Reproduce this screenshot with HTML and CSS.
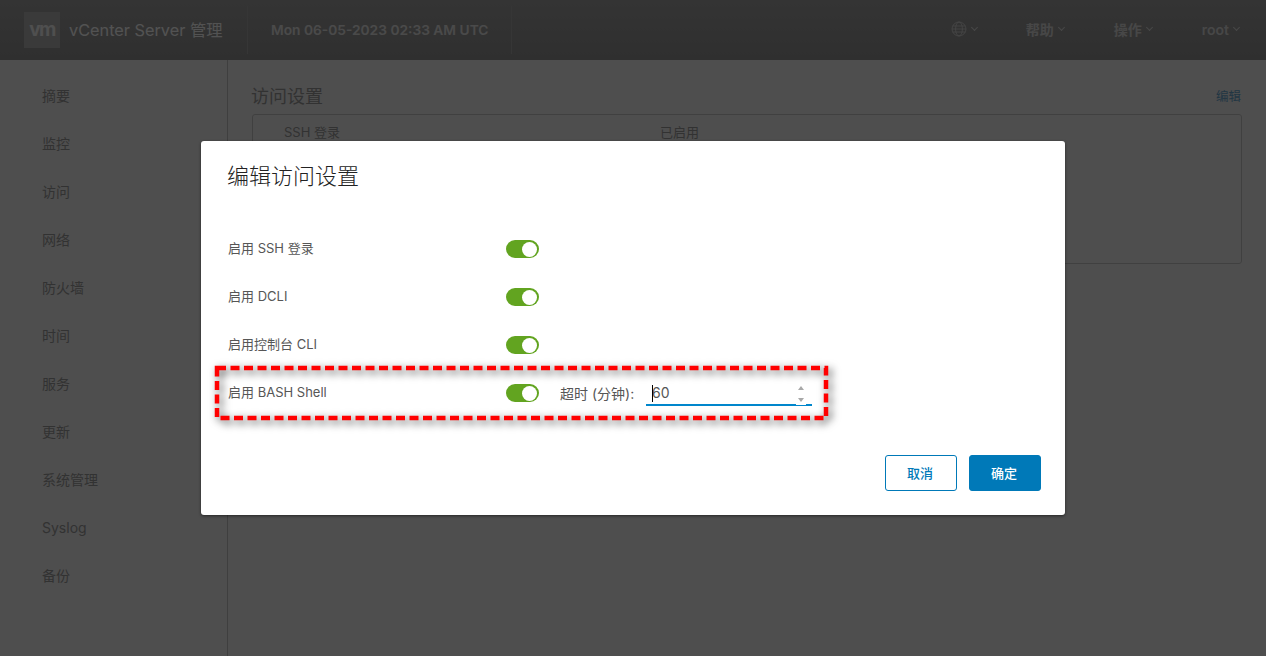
FILE: index.html
```html
<!DOCTYPE html>
<html lang="zh-CN">
<head>
    <meta charset="UTF-8">
    <title>vCenter Server 管理</title>
    <link rel="stylesheet" href="styles.css">
</head>
<body>
    <header class="top-bar">
        <div class="brand">
            <span class="logo">vm</span>
            <span class="brand-name">vCenter Server 管理</span>
        </div>
        <div class="clock">Mon 06-05-2023 02:33 AM UTC</div>
        <nav class="top-menu">
            <span class="top-item globe-item">
                <svg class="globe" width="16" height="16" viewBox="0 0 16 16" fill="none" stroke="currentColor" stroke-width="0.8">
                    <circle cx="8" cy="8" r="7"/>
                    <ellipse cx="8" cy="8" rx="3.4" ry="7"/>
                    <path d="M1.6 5h12.8M1.6 11h12.8M1 8h14"/>
                </svg>
                <span class="chevron"></span>
            </span>
            <span class="top-item">帮助<span class="chevron"></span></span>
            <span class="top-item">操作<span class="chevron"></span></span>
            <span class="top-item">root<span class="chevron"></span></span>
        </nav>
    </header>

    <div class="page">
        <ul class="side-nav">
            <li>摘要</li>
            <li>监控</li>
            <li>访问</li>
            <li>网络</li>
            <li>防火墙</li>
            <li>时间</li>
            <li>服务</li>
            <li>更新</li>
            <li>系统管理</li>
            <li>Syslog</li>
            <li>备份</li>
        </ul>
        <main class="content">
            <div class="content-head">
                <h2>访问设置</h2>
                <a class="edit-link">编辑</a>
            </div>
            <div class="card">
                <div class="card-row"><span class="card-key">SSH 登录</span><span>已启用</span></div>
            </div>
        </main>
    </div>

    <div class="overlay">
        <div class="modal">
            <h1 class="modal-title">编辑访问设置</h1>
            <div class="form-rows">
                <div class="form-row">
                    <span class="form-label">启用 SSH 登录</span>
                    <span class="toggle"></span>
                </div>
                <div class="form-row">
                    <span class="form-label">启用 DCLI</span>
                    <span class="toggle"></span>
                </div>
                <div class="form-row">
                    <span class="form-label">启用控制台 CLI</span>
                    <span class="toggle"></span>
                </div>
                <div class="form-row">
                    <span class="form-label">启用 BASH Shell</span>
                    <span class="toggle"></span>
                    <span class="timeout-label">超时 (分钟):</span>
                    <div class="timeout-input">
                        <span class="caret"></span>60
                        <span class="spinner"><i class="up"></i><i class="down"></i></span>
                    </div>
                </div>
            </div>
            <div class="modal-actions">
                <button class="btn btn-outline">取消</button>
                <button class="btn btn-primary">确定</button>
            </div>

            <svg class="callout" width="625" height="65" viewBox="0 0 625 65">
                <rect x="3" y="3" width="609" height="50" fill="none" stroke="#ff0000" stroke-width="4.5" stroke-dasharray="9 4.5"/>
            </svg>
        </div>
    </div>
</body>
</html>
```

FILE: styles.css
```css
* {
    box-sizing: border-box;
}

html, body {
    margin: 0;
    height: 656px;
    overflow: hidden;
}

body {
    position: relative;
    background: #f2f2f2;
    font-family: "Inter", "Noto Sans CJK SC", sans-serif;
    font-size: 14px;
    color: #9c9c9c;
}

/* header */
.top-bar {
    display: flex;
    align-items: center;
    height: 60px;
    background: linear-gradient(#a2a2a2, #939393);
}

.brand {
    display: flex;
    align-items: center;
    width: 248px;
    height: 48px;
    padding-left: 24px;
    border-right: 1px solid #a8a8a8;
}

.logo {
    width: 36px;
    height: 36px;
    background: #b4b4b4;
    color: #f4f4f4;
    font-size: 19px;
    font-weight: 700;
    line-height: 36px;
    text-align: center;
    letter-spacing: -1.5px;
}

.brand-name {
    margin: -2px 0 0 9px;
    font-size: 16.3px;
    color: #fff;
}

.clock {
    width: 264px;
    height: 48px;
    padding-left: 23px;
    border-right: 1px solid #a8a8a8;
    font-size: 13.75px;
    font-weight: 600;
    line-height: 48px;
    color: #e6e6e6;
}

.top-menu {
    display: flex;
    align-items: center;
    margin: -2px 0 0 auto;
    padding-right: 26px;
    gap: 49px;
    font-size: 14px;
    font-weight: 600;
    color: #dcdcdc;
}

.top-item {
    display: flex;
    align-items: center;
}

.globe-item {
    margin-right: -1px;
}

.globe {
    display: block;
}

.chevron {
    width: 5px;
    height: 5px;
    margin: -3px 1px 0 5px;
    border-right: 1px solid currentColor;
    border-bottom: 1px solid currentColor;
    transform: rotate(45deg);
}

/* page behind the dialog */
.page {
    display: flex;
    height: 596px;
}

.side-nav {
    width: 228px;
    margin: 0;
    padding: 12px 0 0 42px;
    list-style: none;
    border-right: 1px solid #c4c4c4;
}

.side-nav li {
    height: 48px;
    line-height: 48px;
}

.content {
    flex: 1;
    padding: 0 24px;
}

.content-head {
    display: flex;
    align-items: center;
    justify-content: space-between;
    height: 54px;
    padding-top: 16px;
}

.content-head h2 {
    margin: 0 0 0 -1px;
    font-size: 18px;
    font-weight: 400;
}

.edit-link {
    margin-right: 1px;
    font-size: 12.5px;
    color: #6aa8d0;
}

.card {
    height: 150px;
    padding: 5px 0 0 31px;
    border: 1px solid #c8c8c8;
    border-radius: 3px;
    font-size: 13px;
}

.card-row {
    display: flex;
    height: 24px;
    line-height: 24px;
}

.card-key {
    width: 376px;
}

/* dialog */
.overlay {
    position: absolute;
    inset: 0;
    display: flex;
    align-items: center;
    justify-content: center;
    background: rgba(0, 0, 0, 0.68);
}

.modal {
    position: relative;
    width: 864px;
    height: 374px;
    padding: 0 24px 0 27px;
    background: #fff;
    border-radius: 3px;
    box-shadow: 0 1px 3px rgba(0, 0, 0, 0.5);
    color: #565656;
}

.modal-title {
    margin: 0 0 0 -1px;
    padding-top: 19px;
    height: 84px;
    font-size: 22px;
    font-weight: 300;
    line-height: 32px;
    color: #222;
}

.form-row {
    display: flex;
    align-items: center;
    height: 48px;
    font-size: 13px;
}

.form-label {
    width: 278px;
    margin-top: -3px;
}

.toggle {
    position: relative;
    width: 33px;
    height: 18px;
    border-radius: 9px;
    background: #62a420;
}

.toggle::after {
    content: "";
    position: absolute;
    top: 1.5px;
    right: 2px;
    width: 15px;
    height: 15px;
    border-radius: 50%;
    background: #fff;
}

.timeout-label {
    width: 86px;
    margin-left: 21px;
    font-size: 14px;
}

.timeout-input {
    position: relative;
    width: 166px;
    height: 24px;
    margin-top: 2px;
    padding-left: 6px;
    border-bottom: 2px solid #0086cc;
    font-size: 14px;
    line-height: 22px;
    color: #565656;
}

.caret {
    position: absolute;
    top: 3px;
    left: 6px;
    width: 1px;
    height: 17px;
    background: #000;
}

.spinner {
    position: absolute;
    right: 6px;
    top: 0;
    width: 10px;
    height: 23px;
    background: #fff;
}

.spinner i {
    position: absolute;
    left: 2px;
    border-left: 3px solid transparent;
    border-right: 3px solid transparent;
}

.spinner .up {
    top: 4px;
    border-bottom: 4px solid #a8a8a8;
}

.spinner .down {
    top: 16px;
    border-top: 4px solid #a8a8a8;
}

.modal-actions {
    position: absolute;
    right: 24px;
    bottom: 24px;
    display: flex;
    gap: 12px;
}

.btn {
    width: 72px;
    height: 36px;
    padding: 0 2px 2px 0;
    border-radius: 3px;
    font-family: inherit;
    font-size: 13px;
    font-weight: 500;
}

.btn-outline {
    background: #fff;
    border: 1px solid #0079b8;
    color: #0079b8;
}

.btn-primary {
    background: #0079b8;
    border: 1px solid #0079b8;
    color: #fff;
}

/* red annotation over the BASH row */
.callout {
    position: absolute;
    left: 13px;
    top: 224px;
    overflow: visible;
    filter: drop-shadow(3px 3px 4px rgba(0, 0, 0, 0.7));
    pointer-events: none;
}
```
